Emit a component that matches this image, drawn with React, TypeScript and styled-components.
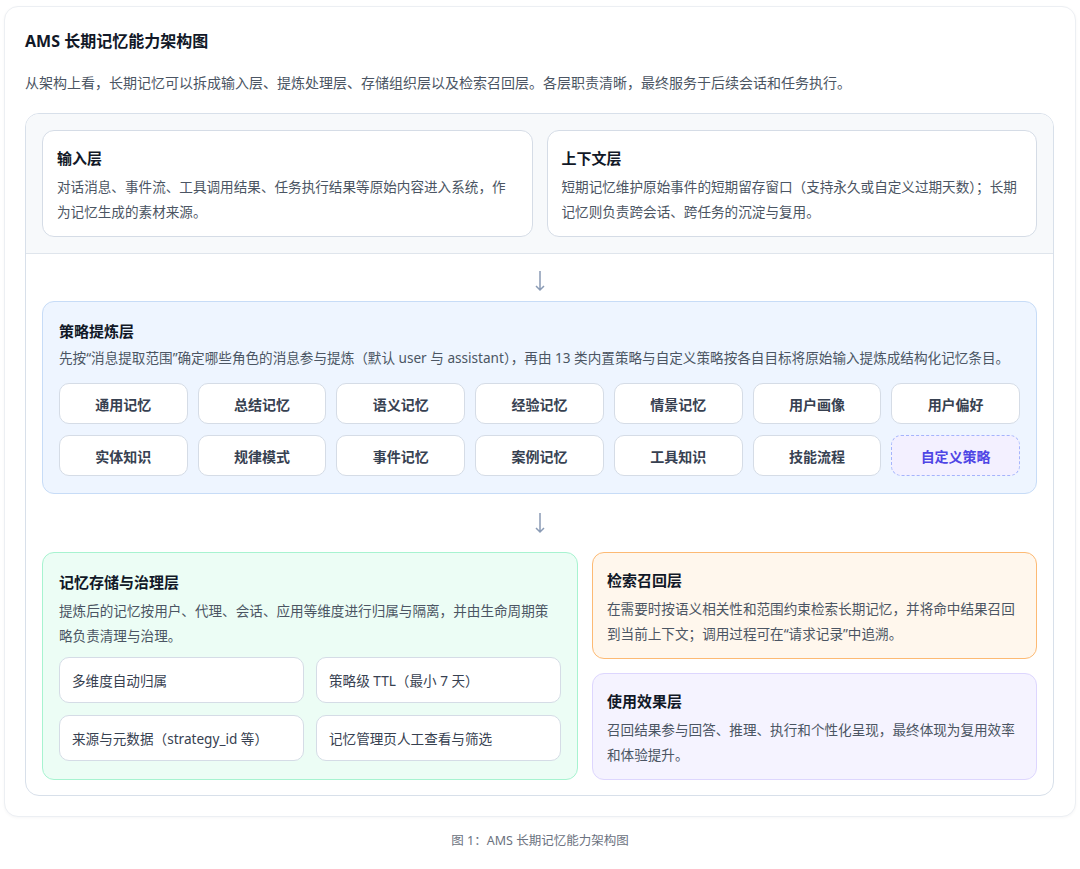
import React from "react";
import styled, { createGlobalStyle } from "styled-components";

const Global = createGlobalStyle`
  html, body { margin: 0; padding: 0; background: #ffffff; }
  body { font-family: "Noto Sans", "Noto Sans CJK SC", sans-serif; color: #1f2329; }
`;

const Page = styled.div`
  width: 1080px;
  padding: 6px 4px 0 4px;
  box-sizing: border-box;
`;

const Card = styled.div`
  background: #fff;
  border: 1px solid #eceff3;
  border-radius: 14px;
  padding: 22px 21px 20px 20px;
  box-shadow: 0 1px 3px rgba(15, 23, 42, 0.04);
`;

const Title = styled.div`
  font-size: 16px;
  font-weight: 700;
  color: #111827;
  line-height: 24px;
`;

const Lead = styled.div`
  margin-top: 19px;
  font-size: 14px;
  color: #4b5563;
  line-height: 22px;
`;

const Diagram = styled.div`
  margin-top: 19px;
  border: 1px solid #d8e0ea;
  border-radius: 14px;
  overflow: hidden;
  background: #fff;
`;

const TopBand = styled.div`
  background: #f7f9fb;
  border-bottom: 1px solid #dfe5ec;
  padding: 16px;
  display: grid;
  grid-template-columns: 1fr 1fr;
  gap: 14px;
`;

const Lower = styled.div`
  padding: 6px 16px 15px 16px;
  display: flex;
  flex-direction: column;
`;

const Box = styled.div<{ $bg: string; $bd: string; $pad?: string }>`
  background: ${(p) => p.$bg};
  border: 1px solid ${(p) => p.$bd};
  border-radius: 12px;
  padding: ${(p) => p.$pad || "16px 16px 12px 14px"};
`;

const BoxTitle = styled.div`
  font-size: 15px;
  font-weight: 700;
  color: #111827;
  line-height: 22px;
`;

const BoxText = styled.div<{ $lh?: number }>`
  margin-top: 5px;
  font-size: 13.6px;
  color: #4b5563;
  line-height: ${(p) => p.$lh || 25}px;
`;

const Arrow = styled.div<{ $h: number }>`
  height: ${(p) => p.$h}px;
  display: flex;
  align-items: center;
  justify-content: center;
  color: #8a9bb5;
`;

const ChipGrid = styled.div<{ $cols: number; $rowGap: number; $colGap: number; $mt: number }>`
  display: grid;
  grid-template-columns: repeat(${(p) => p.$cols}, 1fr);
  row-gap: ${(p) => p.$rowGap}px;
  column-gap: ${(p) => p.$colGap}px;
  margin-top: ${(p) => p.$mt}px;
`;

const Chip = styled.div<{ $custom?: boolean }>`
  height: 41px;
  box-sizing: border-box;
  border-radius: 10px;
  display: flex;
  align-items: center;
  justify-content: center;
  font-size: 14px;
  font-weight: 700;
  background: ${(p) => (p.$custom ? "#f3f0ff" : "#fff")};
  border: 1px ${(p) => (p.$custom ? "dashed #a5b4fc" : "solid #d5dce6")};
  color: ${(p) => (p.$custom ? "#4f46e5" : "#374151")};
`;

const Tag = styled.div`
  height: 46px;
  box-sizing: border-box;
  border-radius: 10px;
  display: flex;
  align-items: center;
  padding: 0 12px;
  font-size: 13.6px;
  background: #fff;
  border: 1px solid #d5dce6;
  color: #374151;
`;

const BottomRow = styled.div`
  display: grid;
  grid-template-columns: 536px 1fr;
  gap: 14px;
`;

const RightCol = styled.div`
  display: flex;
  flex-direction: column;
  gap: 14px;
`;

const Caption = styled.div`
  text-align: center;
  font-size: 12.5px;
  color: #6b7280;
  margin-top: 13px;
`;

const ArrowIcon = () => (
  <svg width="12" height="24" viewBox="0 0 12 24">
    <path d="M6 2 V21 M2 17 L6 21 L10 17" stroke="currentColor" strokeWidth="1.5" fill="none" />
  </svg>
);

const chips = [
  "通用记忆", "总结记忆", "语义记忆", "经验记忆", "情景记忆", "用户画像", "用户偏好",
  "实体知识", "规律模式", "事件记忆", "案例记忆", "工具知识", "技能流程",
];

export default function App() {
  return (
    <>
      <Global />
      <Page>
        <Card>
          <Title>AMS 长期记忆能力架构图</Title>
          <Lead>从架构上看，长期记忆可以拆成输入层、提炼处理层、存储组织层以及检索召回层。各层职责清晰，最终服务于后续会话和任务执行。</Lead>
          <Diagram>
            <TopBand>
              <Box $bg="#fff" $bd="#d5dce6">
                <BoxTitle>输入层</BoxTitle>
                <BoxText>对话消息、事件流、工具调用结果、任务执行结果等原始内容进入系统，作为记忆生成的素材来源。</BoxText>
              </Box>
              <Box $bg="#fff" $bd="#d5dce6">
                <BoxTitle>上下文层</BoxTitle>
                <BoxText>短期记忆维护原始事件的短期留存窗口（支持永久或自定义过期天数）；长期记忆则负责跨会话、跨任务的沉淀与复用。</BoxText>
              </Box>
            </TopBand>
            <Lower>
              <Arrow $h={41}><ArrowIcon /></Arrow>
              <Box $bg="#eef5ff" $bd="#c7dcf7" $pad="18px 16px 17px 16px">
                <BoxTitle>策略提炼层</BoxTitle>
                <BoxText $lh={22}>
                  先按“消息提取范围”确定哪些角色的消息参与提炼（默认 user 与 assistant），再由 13 类内置策略与自定义策略按各自目标将原始输入提炼成结构化记忆条目。
                </BoxText>
                <ChipGrid $cols={7} $rowGap={11} $colGap={10} $mt={14}>
                  {chips.map((c) => (
                    <Chip key={c}>{c}</Chip>
                  ))}
                  <Chip $custom>自定义策略</Chip>
                </ChipGrid>
              </Box>
              <Arrow $h={58}><ArrowIcon /></Arrow>
              <BottomRow>
                <Box $bg="#ecfdf5" $bd="#a7f3d0" $pad="18px 16px 16px 16px">
                  <BoxTitle>记忆存储与治理层</BoxTitle>
                  <BoxText>提炼后的记忆按用户、代理、会话、应用等维度进行归属与隔离，并由生命周期策略负责清理与治理。</BoxText>
                  <ChipGrid $cols={2} $rowGap={12} $colGap={12} $mt={9}>
                    <Tag>多维度自动归属</Tag>
                    <Tag>策略级 TTL（最小 7 天）</Tag>
                    <Tag>来源与元数据（strategy_id 等）</Tag>
                    <Tag>记忆管理页人工查看与筛选</Tag>
                  </ChipGrid>
                </Box>
                <RightCol>
                  <Box $bg="#fff7ed" $bd="#fdba74">
                    <BoxTitle>检索召回层</BoxTitle>
                    <BoxText>在需要时按语义相关性和范围约束检索长期记忆，并将命中结果召回到当前上下文；调用过程可在“请求记录”中追溯。</BoxText>
                  </Box>
                  <Box $bg="#f5f3ff" $bd="#ddd6fe">
                    <BoxTitle>使用效果层</BoxTitle>
                    <BoxText>召回结果参与回答、推理、执行和个性化呈现，最终体现为复用效率和体验提升。</BoxText>
                  </Box>
                </RightCol>
              </BottomRow>
            </Lower>
          </Diagram>
        </Card>
        <Caption>图 1：AMS 长期记忆能力架构图</Caption>
      </Page>
    </>
  );
}
